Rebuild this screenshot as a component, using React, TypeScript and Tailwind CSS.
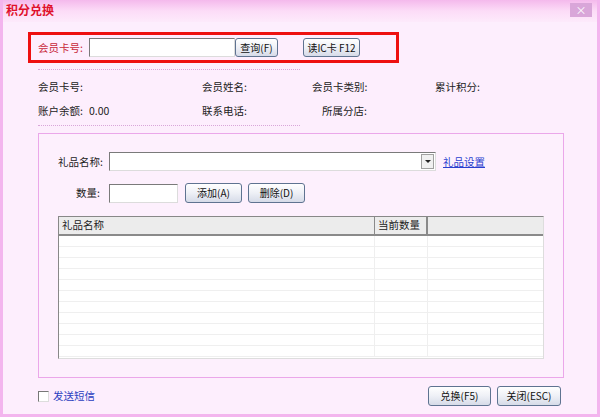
import React from "react";

const font = { fontFamily: '"Noto Sans CJK SC", "Noto Sans", sans-serif' };

const btn =
  "flex items-center justify-center whitespace-nowrap rounded-[3px] border border-[#5f7391] bg-gradient-to-b from-[#ffffff] via-[#eef0f6] to-[#d6dbe8] text-[10px] leading-none text-[#111]";

function Dotted() {
  return <div className="h-0 w-[262px] border-t border-dotted border-[#d9a6d9]" />;
}

export default function App() {
  const rows = Array.from({ length: 11 });
  return (
    <div
      className="flex h-[417px] w-[600px] flex-col overflow-hidden whitespace-nowrap border-x-[3px] border-b-[3px] border-[#f3b5ee] bg-[#fdeefd] text-[10.5px] text-[#222]"
      style={font}
    >
      {/* title bar */}
      <div className="flex h-[22px] shrink-0 items-start justify-between bg-gradient-to-b from-[#f4b9ec] via-[#fcdcf7] to-[#fdeafb] pl-[3px] pr-[5px]">
        <span className="mt-[4px] text-[12px] font-bold leading-none text-[#e0102a]">积分兑换</span>
        <div className="mt-[3px] flex h-[14px] w-[22px] items-center justify-center bg-[#d9a6d9] text-[11px] leading-none text-white">
          ×
        </div>
      </div>

      <div className="flex flex-1 flex-col pl-[35px] pr-[34px]">
        {/* card query */}
        <div className="-ml-[10px] mt-[10px] flex h-[31px] w-[371px] items-center border-[3px] border-[#ee1010] pl-[7px]">
          <span className="w-[51px] text-[#c8283a]">会员卡号:</span>
          <div className="h-[19px] w-[146px] border border-[#7a7a7a] border-r-[#dcdcdc] border-b-[#dcdcdc] bg-white" />
          <div className={`${btn} h-[19px] w-[43px] border-[#3a3a3a]`}>查询(F)</div>
          <div className={`${btn} ml-[25px] h-[19px] w-[57px]`}>读IC卡 F12</div>
        </div>

        <div className="mt-[6px]">
          <Dotted />
        </div>

        {/* member info */}
        <div className="mt-[11px] flex h-[13px] items-center leading-none">
          <span className="w-[164px]">会员卡号:</span>
          <span className="w-[110px]">会员姓名:</span>
          <span className="w-[123px]">会员卡类别:</span>
          <span>累计积分:</span>
        </div>
        <div className="mt-[11px] flex h-[13px] items-center leading-none">
          <span className="w-[51px]">账户余额:</span>
          <span className="w-[113px]">0.00</span>
          <span className="w-[120px]">联系电话:</span>
          <span>所属分店:</span>
        </div>
        <div className="mt-[7px]">
          <Dotted />
        </div>

        {/* gift group */}
        <div className="mt-[7px] flex h-[245px] w-[526px] flex-col border border-[#eba7ea] bg-[#fdf0fd] pl-[19px]">
          <div className="mt-[18px] flex items-center">
            <span className="w-[51px]">礼品名称:</span>
            <div className="flex h-[19px] w-[327px] items-stretch border border-[#7a7a7a] border-r-[#dcdcdc] border-b-[#dcdcdc] bg-white">
              <div className="flex-1" />
              <div className="m-[1px] flex w-[13px] items-center justify-center border border-[#a0a0a0] bg-[#f0f0f0]">
                <div className="h-0 w-0 border-x-[3px] border-t-[3px] border-x-transparent border-t-[#222]" />
              </div>
            </div>
            <span className="ml-[7px] text-[#2a3fcf] underline">礼品设置</span>
          </div>
          <div className="mt-[12px] flex items-center">
            <span className="w-[51px] pl-[18px]">数量:</span>
            <div className="h-[19px] w-[69px] border border-[#7a7a7a] border-r-[#dcdcdc] border-b-[#dcdcdc] bg-white" />
            <div className={`${btn} ml-[7px] h-[20px] w-[57px]`}>添加(A)</div>
            <div className={`${btn} ml-[6px] h-[20px] w-[57px]`}>删除(D)</div>
          </div>

          {/* table */}
          <div className="mt-[13px] flex h-[143px] w-[486px] flex-col overflow-hidden border border-[#888] border-r-[#ddd] border-b-[#ddd] bg-white">
            <div className="flex h-[19px] shrink-0 border-b-2 border-[#8a8a8a] bg-[#ececec] leading-none">
              <div className="flex w-[316px] items-center border-r border-[#8a8a8a] pl-[3px]">礼品名称</div>
              <div className="flex w-[53px] items-center border-r-2 border-[#8a8a8a] pl-[3px]">当前数量</div>
              <div className="flex-1" />
            </div>
            {rows.map((_, i) => (
              <div key={i} className="flex h-[11px] shrink-0 border-b border-[#efefef]">
                <div className="w-[316px] border-r border-[#efefef]" />
                <div className="w-[53px] border-r border-[#efefef]" />
                <div className="flex-1" />
              </div>
            ))}
          </div>
        </div>

        {/* footer */}
        <div className="mt-[8px] flex items-center">
          <div className="h-[11px] w-[11px] border border-[#777] border-r-[#ddd] border-b-[#ddd] bg-white" />
          <span className="ml-[4px] text-[#2b3fc0]">发送短信</span>
          <div className="flex-1" />
          <div className={`${btn} h-[20px] w-[63px]`}>兑换(F5)</div>
          <div className={`${btn} ml-[6px] h-[20px] w-[64px]`}>关闭(ESC)</div>
          <div className="w-[2px]" />
        </div>
      </div>
    </div>
  );
}
